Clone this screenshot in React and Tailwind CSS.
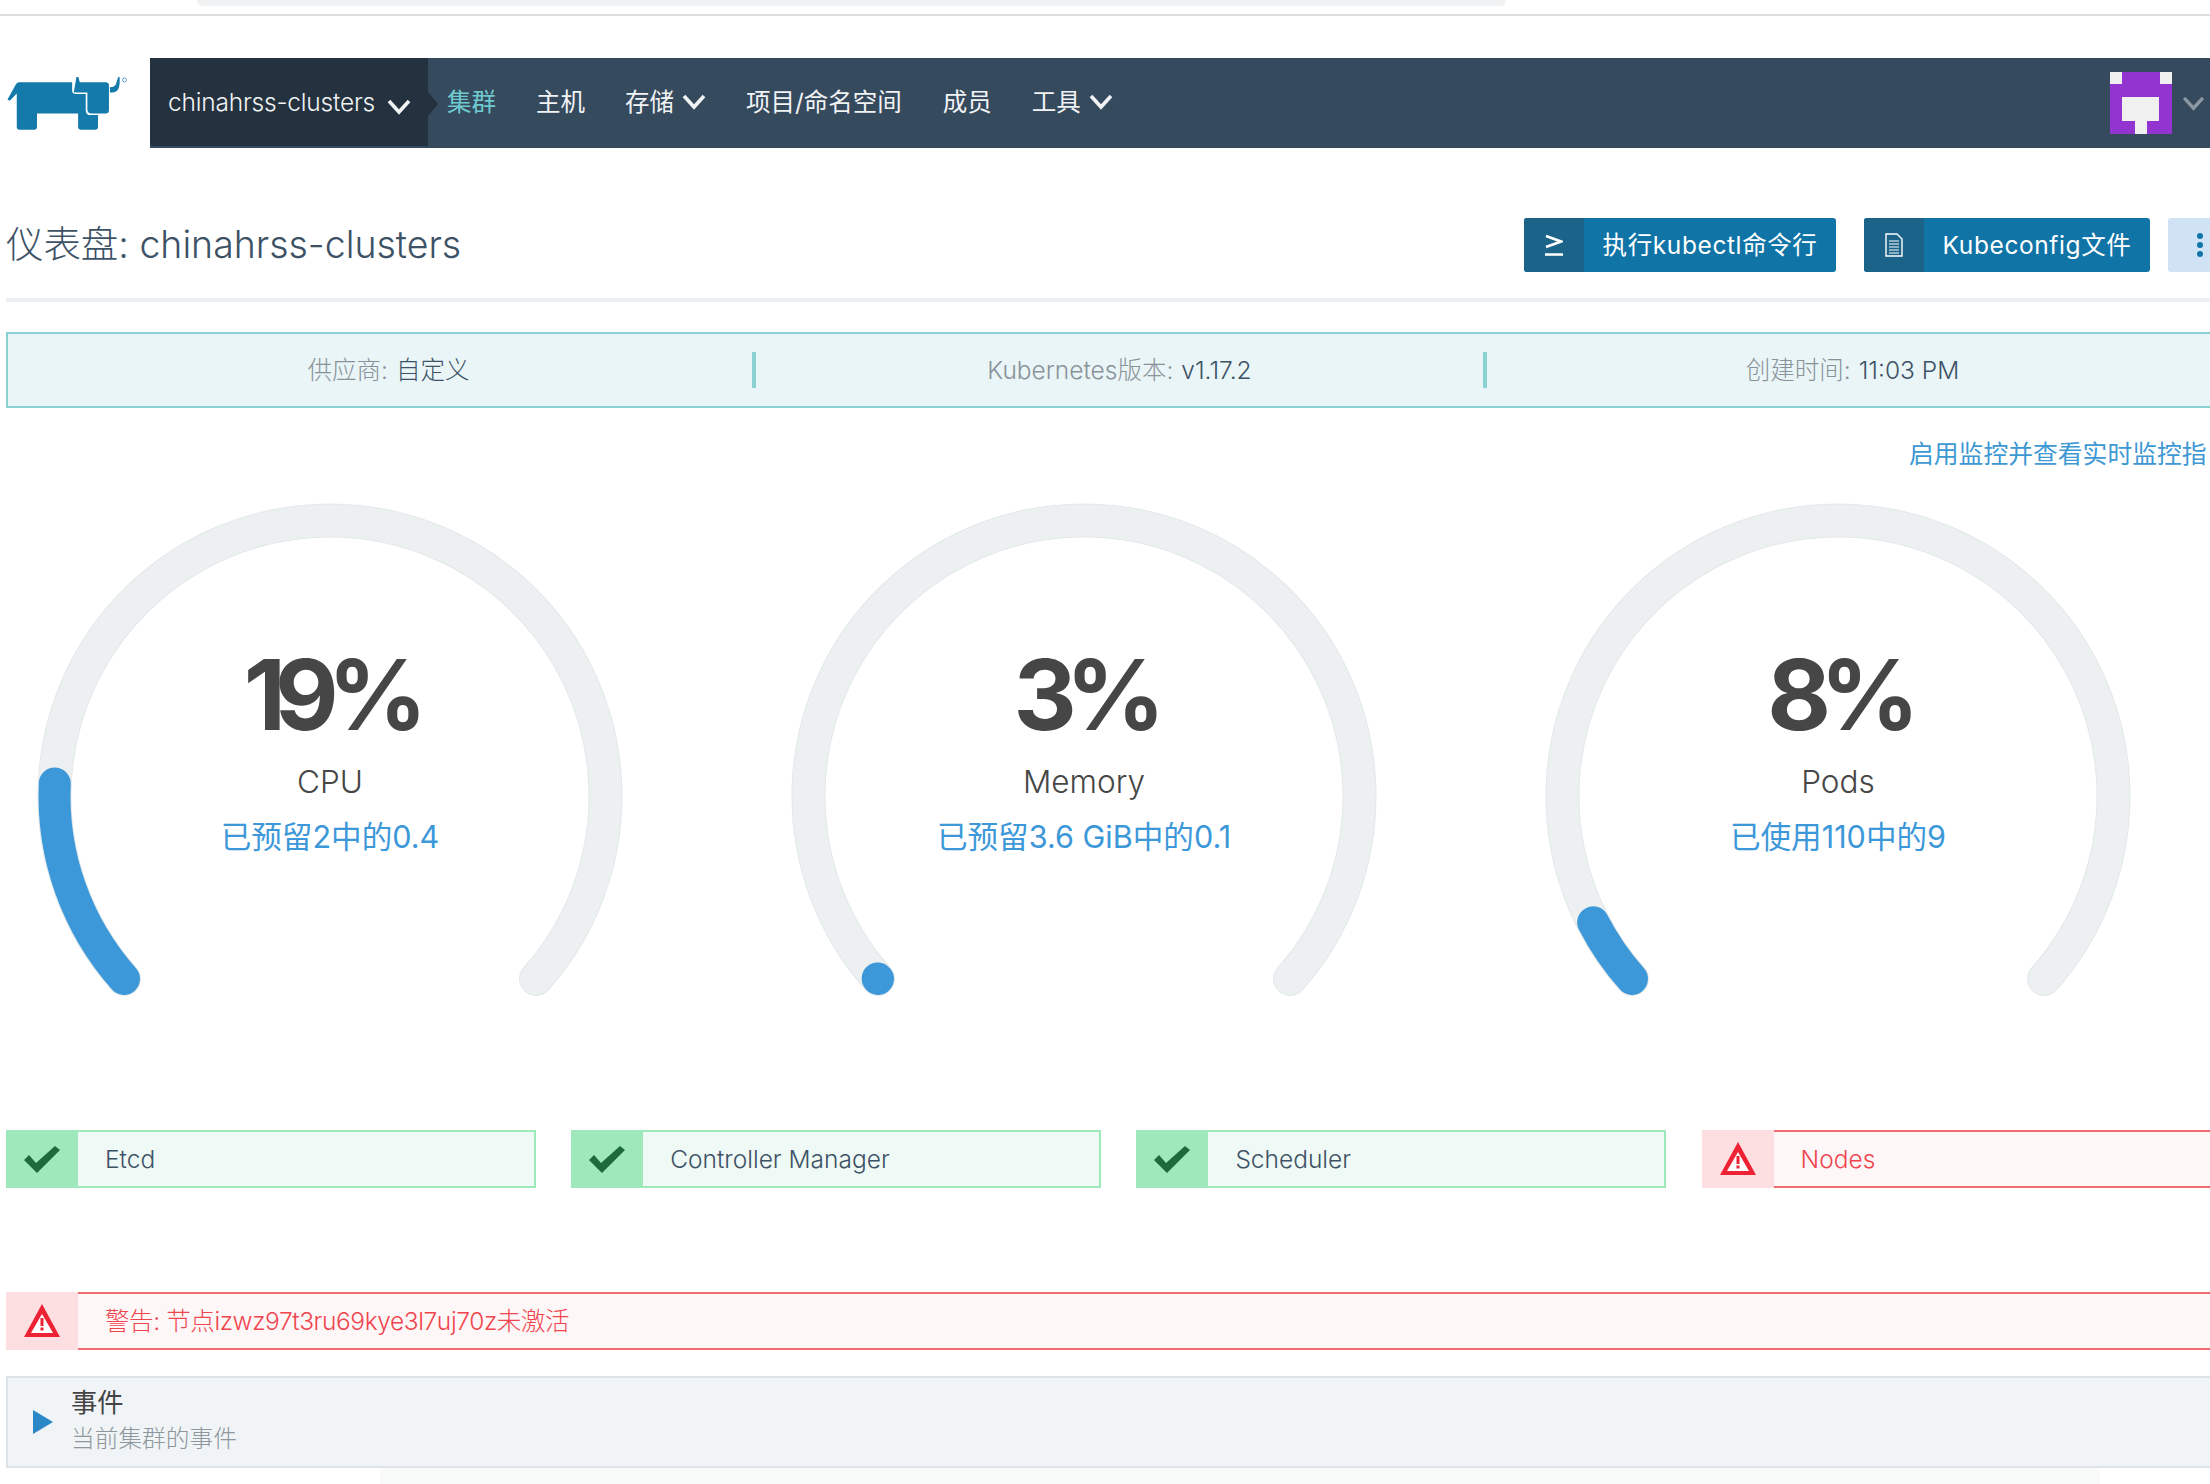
import React from 'react';

const latin = "font-['Inter','Noto_Sans_CJK_SC',sans-serif]";

const polar = (angle) => {
  // angle in degrees, measured clockwise from the bottom of the gauge
  const rad = (angle * Math.PI) / 180;
  return [330 - 275.5 * Math.sin(rad), 295 + 275.5 * Math.cos(rad)];
};

const arcPath = (from, to) => {
  const [x1, y1] = polar(from);
  const [x2, y2] = polar(to);
  const large = to - from > 180 ? 1 : 0;
  return `M${x1} ${y1} A275.5 275.5 0 ${large} 1 ${x2} ${y2}`;
};

const Chevron = ({ className }) => (
  <svg viewBox="0 0 24 16" className={className} fill="none" stroke="currentColor" strokeWidth="3.6">
    <path d="M2 2l10 11L22 2" />
  </svg>
);

const Logo = () => (
  <svg viewBox="0 60 400 190" className="w-[133px] h-[63px] text-[#1479ab]" fill="currentColor">
    <path d="M22 146L48 99Q51 94 57 94L217 94L217 119Q217 129 227 129L258 129L258 178Q258 193 273 193L295 193L295 230Q295 237 288 237L242 237Q235 237 235 230L235 188L111 188L111 230Q111 237 104 237L57 237Q50 237 50 230L50 128L29 150Z" />
    <path d="M222 124L230 78L236 78L240 94L318 94Q328 94 328 104L328 178Q328 188 318 188L276 188Q263 188 263 175L263 125L230 125Z" />
    <path d="M331 109Q345 109 349 100L356 78L360 78Q364 125 338 125L331 125Z" />
    <circle cx="375" cy="87" r="6" fill="none" stroke="currentColor" strokeWidth="2" />
  </svg>
);

const Avatar = () => (
  <svg viewBox="0 0 62 62" className="w-[62px] h-[62px]">
    <rect width="62" height="62" fill="#9333d0" />
    <rect width="12" height="12" fill="#f0f0f0" />
    <rect x="50" width="12" height="12" fill="#f0f0f0" />
    <rect x="12" y="25" width="37" height="24" fill="#f0f0f0" />
    <rect x="25" y="49" width="12" height="13" fill="#f0f0f0" />
  </svg>
);

const Check = () => (
  <svg viewBox="0 0 36 27" className="w-[36px] h-[27px] text-[#1d6a3d]" fill="currentColor">
    <path d="M0 14L5 9L12 17L31 0L36 4L13 27Z" />
  </svg>
);

const Warn = () => (
  <svg viewBox="0 0 36 34" className="w-[36px] h-[34px]">
    <path d="M18 0L36 33L0 33Z" fill="#ee2235" />
    <path d="M18 10L29 29L7 29Z" fill="#fff" />
    <rect x="16.5" y="14" width="3" height="8" fill="#ee2235" />
    <rect x="16.5" y="23.5" width="3" height="3" fill="#ee2235" />
  </svg>
);

const NavItem = ({ label, active, menu, className }) => (
  <div className={`flex items-center gap-[8px] pb-[2px] ${className}`}>
    <span className={active ? 'text-[#6fcbcf]' : 'text-[#f1f3f5]'}>{label}</span>
    {menu && <Chevron className="w-[24px] h-[16px] text-[#f1f3f5]" />}
  </div>
);

const ActionButton = ({ icon, label, className }) => (
  <button className={`flex h-[54px] rounded-[3px] overflow-hidden bg-[#1174a6] text-white text-[24.5px] tracking-[0.6px] font-normal ${className}`}>
    <span className="w-[60px] h-full bg-[#1b6389] flex items-center justify-center shrink-0">{icon}</span>
    <span className="flex-1 h-full flex items-center justify-center">{label}</span>
  </button>
);

const Gauge = ({ value, label, detail, to }) => (
  <div className="relative w-[660px] h-[510px] shrink-0">
    <svg viewBox="0 0 660 510" className="w-[660px] h-[510px]" fill="none" strokeLinecap="round">
      <path d={arcPath(48.4, 311.6)} stroke="#e3e8ea" strokeWidth="34" />
      <path d={arcPath(48.4, 311.6)} stroke="#ecf0f1" strokeWidth="32" />
      <path d={arcPath(48.4, to)} stroke="#3d98d9" strokeWidth="32" />
    </svg>
    <div className="absolute inset-x-0 top-[138px] flex flex-col items-center">
      <div className="h-[110px] flex items-center text-[98px] font-bold tracking-[-11px] text-[#464646]">{value}</div>
      <div className="mt-[13px] h-[40px] flex items-center text-[31.5px] font-light text-[#464646]">{label}</div>
      <div className="mt-[15px] h-[40px] flex items-center text-[30.6px] font-normal text-[#3d98d9]">{detail}</div>
    </div>
  </div>
);

const StatusCard = ({ label, bad }) => (
  <div className={`flex h-[58px] w-[530px] shrink-0 ${bad ? 'text-[#f0454f]' : 'text-[#3d5266]'}`}>
    <div className={`w-[72px] flex items-center justify-center shrink-0 ${bad ? 'bg-[#fddfe2]' : 'bg-[#9fe8bc]'}`}>
      {bad ? <Warn /> : <Check />}
    </div>
    <div className={`flex-1 flex items-center pl-[27px] border-y-2 ${bad ? 'border-[#f26d72] bg-[#fef7f7]' : 'border-r-2 border-[#9fe8bc] bg-[#eff9f5]'}`}>
      {label}
    </div>
  </div>
);

const InfoCell = ({ label, value, divider }) => (
  <div className={`w-[731px] h-[36px] flex items-center justify-center gap-[8px] ${divider ? 'border-r-4 border-[#8ad2d2]' : ''}`}>
    <span className="text-[#8a9299]">{label}</span>
    <span className="text-[#3d5266]">{value}</span>
  </div>
);

export default function App() {
  return (
    <div className={`w-[2210px] h-[1484px] overflow-hidden bg-white text-[24.5px] font-light ${latin}`}>
      <div className="ml-[197px] w-[1309px] h-[6px] rounded-b-xl bg-[#f1f2f4]"></div>
      <div className="mt-[8px] h-[2px] bg-[#dcdce0]"></div>

      {/* Header */}
      <div className="mt-[42px] flex h-[90px]">
        <div className="w-[150px] flex items-center shrink-0 pb-[2px]"><Logo /></div>
        <div className="flex-1 flex items-center bg-[#364a5e] font-normal">
          <div className="relative w-[278px] h-[88px] self-start bg-[#24313e] rounded-bl-[3px] flex items-center pl-[18px] gap-[12px] text-[#f1f3f5] font-light shrink-0">
            <span className="tracking-[-0.2px]">chinahrss-clusters</span>
            <Chevron className="w-[24px] h-[16px] mt-[10px]" />
            <span className="absolute left-full top-[34px] border-y-[12px] border-l-[10px] border-y-transparent border-l-[#24313e]"></span>
          </div>
          <NavItem label="集群" active className="ml-[19px]" />
          <NavItem label="主机" className="ml-[40px]" />
          <NavItem label="存储" menu className="ml-[40px]" />
          <NavItem label="项目/命名空间" className="ml-[40px]" />
          <NavItem label="成员" className="ml-[41px]" />
          <NavItem label="工具" menu className="ml-[40px]" />
          <div className="ml-auto flex items-center gap-[10px] pr-[5px]">
            <Avatar />
            <Chevron className="w-[23px] h-[15px] text-[#8b98a3]" />
          </div>
        </div>
      </div>

      {/* Title row */}
      <div className="ml-[6px] w-[2210px] pt-[70px] pb-[26px] border-b-4 border-[#edf0f2] flex items-center justify-between">
        <h1 className="text-[37.45px] leading-[54px] font-light text-[#3d5266]">仪表盘: chinahrss-clusters</h1>
        <div className="flex items-center">
          <ActionButton
            className="w-[312px]"
            label="执行kubectl命令行"
            icon={
              <svg viewBox="0 0 18 22" className="w-[18px] h-[22px]" fill="none" stroke="currentColor" strokeWidth="2.6">
                <path d="M1 2l15 5.5L1 13" />
                <path d="M0 20.5h18" />
              </svg>
            }
          />
          <ActionButton
            className="ml-[28px] w-[286px]"
            label="Kubeconfig文件"
            icon={
              <svg viewBox="0 0 18 24" className="w-[18px] h-[24px]" fill="none" stroke="currentColor" strokeWidth="1.4">
                <path d="M1 1h11l5 5v17H1z" />
                <path d="M4 8h10M4 11h10M4 14h10M4 17h10M4 20h10" strokeWidth="1.2" />
              </svg>
            }
          />
          <div className="ml-[18px] w-[48px] h-[54px] rounded-[3px] bg-[#cfe3f5] pl-[29px] flex flex-col justify-center gap-[3px]">
            <span className="w-[6px] h-[6px] rounded-full bg-[#1174a6]"></span>
            <span className="w-[6px] h-[6px] rounded-full bg-[#1174a6]"></span>
            <span className="w-[6px] h-[6px] rounded-full bg-[#1174a6]"></span>
          </div>
        </div>
      </div>

      {/* Cluster info */}
      <div className="ml-[6px] mt-[30px] w-[2240px] h-[76px] border-2 border-[#8ad2d2] bg-[#e9f5f7] flex items-center pl-[17px]">
        <InfoCell label="供应商:" value="自定义" divider />
        <InfoCell label="Kubernetes版本:" value="v1.17.2" divider />
        <InfoCell label="创建时间:" value="11:03 PM" />
      </div>

      <div className="mt-[32px] h-[30px] flex items-center pl-[1909px] text-[24.8px] font-normal text-[#3d98d3] whitespace-nowrap">启用监控并查看实时监控指</div>

      {/* Gauges */}
      <div className="mt-[31px] flex gap-[94px]">
        <Gauge value="19%" label="CPU" detail="已预留2中的0.4" to={92.6} />
        <Gauge value="3%" label="Memory" detail="已预留3.6 GiB中的0.1" to={48.5} />
        <Gauge value="8%" label="Pods" detail="已使用110中的9" to={62.7} />
      </div>

      {/* Component status */}
      <div className="ml-[6px] mt-[119px] flex gap-[35.2px]">
        <StatusCard label="Etcd" />
        <StatusCard label="Controller Manager" />
        <StatusCard label="Scheduler" />
        <StatusCard label="Nodes" bad />
      </div>

      {/* Node warning */}
      <div className="ml-[6px] mt-[104px] w-[2240px] h-[58px] flex text-[#f0454f]">
        <div className="w-[72px] bg-[#fddfe2] flex items-center justify-center shrink-0"><Warn /></div>
        <div className="flex-1 flex items-center pl-[27px] border-y-2 border-[#f26d72] bg-[#fef7f7] tracking-[-0.4px]">警告: 节点izwz97t3ru69kye3l7uj70z未激活</div>
      </div>

      {/* Events */}
      <div className="ml-[6px] mt-[26px] w-[2240px] h-[92px] border-2 border-[#dde3e6] bg-[#f1f4f6] flex items-center pl-[25px]">
        <span className="border-y-[12px] border-l-[20px] border-y-transparent border-l-[#2a87c8] shrink-0"></span>
        <div className="ml-[18px] flex flex-col -mt-[2px]">
          <span className="leading-[36px] text-[26.25px] text-[#444444] font-normal">事件</span>
          <span className="leading-[36px] text-[23.7px] text-[#8e979e]">当前集群的事件</span>
        </div>
      </div>
      <div className="ml-[380px] w-[1720px] h-[16px] bg-[#f8f9f9]"></div>
    </div>
  );
}
